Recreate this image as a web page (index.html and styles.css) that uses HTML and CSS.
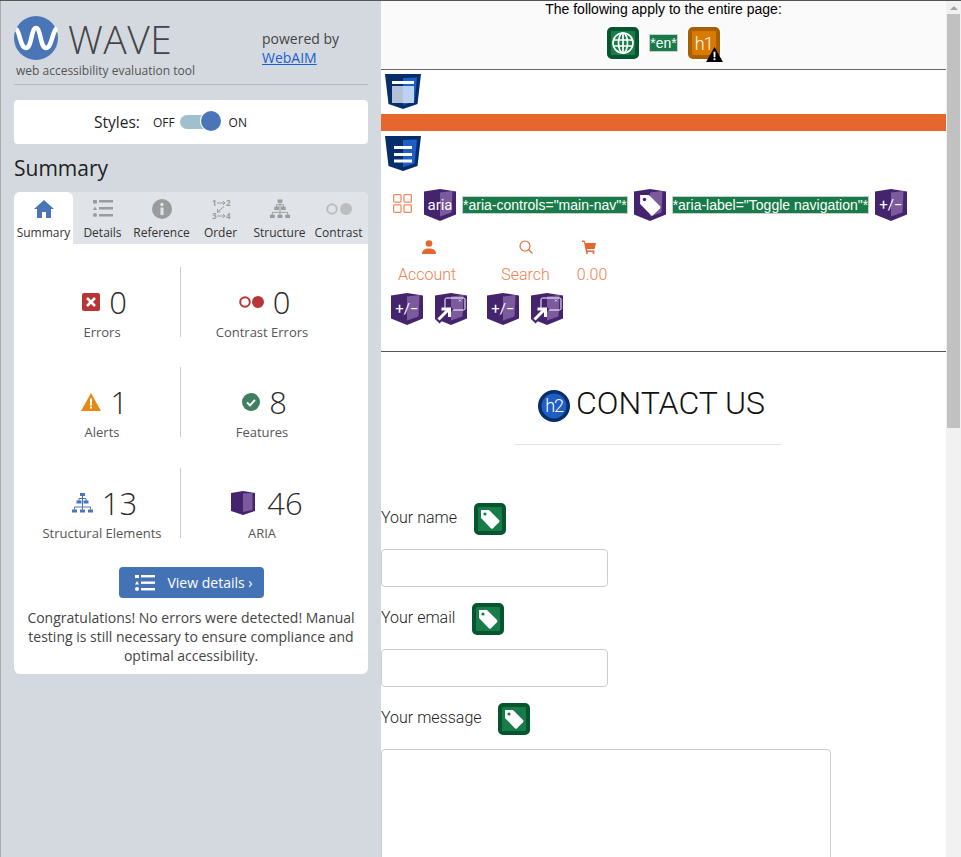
FILE: index.html
```html
<!DOCTYPE html>
<html lang="en">
<head>
  <meta charset="UTF-8" />
  <meta name="viewport" content="width=device-width, initial-scale=1.0" />
  <title>WAVE Report</title>
  <link rel="stylesheet" href="styles.css">
</head>
<body>
  <svg class="defs" xmlns="http://www.w3.org/2000/svg">
    <symbol id="shield-purple" viewBox="0 0 32 32">
      <path d="M0 2.500 16 0l16 2.500v23L16 32 0 25.500z" fill="#45246e"/>
      <path d="M16 3.500 28.500 2l-1 21.500L16 27.500z" fill="#7c5a9e"/>
    </symbol>
    <symbol id="shield-blue" viewBox="0 0 36 36">
      <path d="M0 0h36l-3.500 30L18 35 3.500 30z" fill="#052e6b"/>
      <path d="M18 4 32 3.500l-2.500 24L18 31z" fill="#1f5fc4"/>
    </symbol>
    <symbol id="tag-glyph" viewBox="0 0 20 20">
      <path d="M1 1h8l10 10a1.600 1.600 0 0 1 0 2.200l-6 6a1.600 1.600 0 0 1-2.200 0L1 9z" fill="#fff"/>
    </symbol>
    <symbol id="plus-minus" viewBox="0 0 32 32">
      <use href="#shield-purple"/>
      <text x="16" y="21" text-anchor="middle" class="icon-text" font-size="15">+/−</text>
    </symbol>
    <symbol id="expand" viewBox="0 0 32 32">
      <use href="#shield-purple"/>
      <rect x="10" y="5" width="20" height="12" rx="1.500" fill="none" stroke="#fff"/>
      <path d="M24 6.500l2 2m0-2-2 2" stroke="#fff" stroke-width=".7"/>
      <path d="M2 28 16 14" stroke="#45246e" stroke-width="7"/>
      <path d="M3.500 26.500 13.500 16.500" stroke="#fff" stroke-width="3"/>
      <path d="M6.500 16h8v8" fill="none" stroke="#fff" stroke-width="3"/>
    </symbol>
  </svg>

  <aside class="sidebar">
    <header class="brand">
      <div class="brand-left">
        <div class="logo-row">
          <svg class="logo" viewBox="0 0 44 44">
            <circle cx="22" cy="22" r="22" fill="#4a76b8"/>
            <path d="M2 13C6 15 6 32 12 32 18 32 17 12 22 12 27 12 26 32 32 32 38 32 38 15 43 12" fill="none" stroke="#fff" stroke-width="4.500"/>
          </svg>
          <span class="logo-word">WAVE</span>
        </div>
        <div class="tagline">web accessibility evaluation tool</div>
      </div>
      <div class="powered">powered by<br><a href="#">WebAIM</a></div>
    </header>

    <div class="styles-card">
      <span class="styles-label">Styles:</span>
      <span class="switch-text">OFF</span>
      <span class="switch"><span class="switch-knob"></span></span>
      <span class="switch-text">ON</span>
    </div>

    <h2 class="side-title">Summary</h2>

    <div class="panel">
      <nav class="tabs">
        <div class="tab active">
          <svg viewBox="0 0 20 18"><path d="M10 0 20 9h-3v9h-5v-6H8v6H3V9H0z" fill="#4a76b8"/></svg>
          <span>Summary</span>
        </div>
        <div class="tab">
          <svg viewBox="0 0 20 18" fill="#9b9b9b"><rect x="0" y="0" width="4" height="3.500" rx=".5"/><rect x="6" y="0" width="14" height="2.500"/><path d="M2 6.500 4 10H0z"/><rect x="6" y="7" width="14" height="2.500"/><circle cx="2" cy="15" r="2"/><rect x="6" y="14" width="14" height="2.500"/></svg>
          <span>Details</span>
        </div>
        <div class="tab">
          <svg viewBox="0 0 20 20"><circle cx="10" cy="10" r="10" fill="#9b9b9b"/><rect x="8.500" y="8.500" width="3" height="7.500" fill="#e0e3e8"/><circle cx="10" cy="5.500" r="1.700" fill="#e0e3e8"/></svg>
          <span>Reference</span>
        </div>
        <div class="tab">
          <svg class="order-ico" viewBox="0 -3 20 26">
            <text x="1" y="7" class="order-num">1</text><text x="15" y="7" class="order-num">2</text>
            <text x="1" y="20" class="order-num">3</text><text x="15" y="20" class="order-num">4</text>
            <path d="M6 4h8M12 2l2 2-2 2M6 17h8M12 15l2 2-2 2M13 7.500 6.500 13M6.500 10v3h3" fill="none" stroke="#9b9b9b"/>
          </svg>
          <span>Order</span>
        </div>
        <div class="tab">
          <svg viewBox="0 0 21 20"><g fill="#9b9b9b"><rect x="8" y="0" width="5" height="3.500"/><rect x="4.500" y="7.500" width="5" height="3.500"/><rect x="11.500" y="7.500" width="5" height="3.500"/><rect x="0" y="16" width="5" height="3.500"/><rect x="8" y="16" width="5" height="3.500"/><rect x="16" y="16" width="5" height="3.500"/></g><path d="M10.500 3v13.500M7 9.500V5.500h7v4M2.500 16v-2.500h16V16" fill="none" stroke="#9b9b9b"/></svg>
          <span>Structure</span>
        </div>
        <div class="tab">
          <svg class="contrast-tab" viewBox="0 0 26 12"><circle cx="6" cy="6" r="4.800" fill="none" stroke="#bdbdbd" stroke-width="2"/><circle cx="20" cy="6" r="6" fill="#bdbdbd"/></svg>
          <span>Contrast</span>
        </div>
      </nav>

      <div class="stats">
        <div class="stat">
          <div class="stat-top">
            <svg class="ico-18" viewBox="0 0 18 18"><rect width="18" height="18" rx="2" fill="#b93535"/><path d="M5 5l8 8m0-8-8 8" stroke="#fff" stroke-width="2.600"/></svg>
            <span class="stat-num">0</span>
          </div>
          <div class="stat-label">Errors</div>
        </div>
        <div class="stat">
          <div class="stat-top">
            <svg class="ico-contrast" viewBox="0 0 25 12"><circle cx="6" cy="6" r="4.800" fill="none" stroke="#b93535" stroke-width="2"/><circle cx="19" cy="6" r="6" fill="#b93535"/></svg>
            <span class="stat-num">0</span>
          </div>
          <div class="stat-label">Contrast Errors</div>
        </div>
        <div class="stat">
          <div class="stat-top">
            <svg class="ico-alert" viewBox="0 0 20 18"><path d="M10 0 20 18H0z" fill="#e68a14"/><rect x="9" y="5.500" width="2" height="7" fill="#fff"/><rect x="9" y="13.500" width="2" height="2" fill="#fff"/></svg>
            <span class="stat-num">1</span>
          </div>
          <div class="stat-label">Alerts</div>
        </div>
        <div class="stat">
          <div class="stat-top">
            <svg class="ico-18" viewBox="0 0 18 18"><circle cx="9" cy="9" r="9" fill="#3f7f5f"/><path d="M5 9.500l3 2.800 5-5.500" fill="none" stroke="#fff" stroke-width="2"/></svg>
            <span class="stat-num">8</span>
          </div>
          <div class="stat-label">Features</div>
        </div>
        <div class="stat">
          <div class="stat-top">
            <svg class="ico-tree" viewBox="0 0 21 20"><g fill="#4a76b8"><rect x="8" y="0" width="5" height="3"/><rect x="4.500" y="7.500" width="5" height="3"/><rect x="11.500" y="7.500" width="5" height="3"/><rect x="0" y="16.500" width="5" height="3"/><rect x="8" y="16.500" width="5" height="3"/><rect x="16" y="16.500" width="5" height="3"/></g><path d="M10.500 3v13.500M7 8V5.500h7V8M2.500 16.500v-2.500h16v2.500" fill="none" stroke="#4a76b8"/></svg>
            <span class="stat-num">13</span>
          </div>
          <div class="stat-label">Structural Elements</div>
        </div>
        <div class="stat">
          <div class="stat-top">
            <svg class="ico-aria" viewBox="0 0 24 24"><path d="M0 2 12 0l12 2v18l-12 4-12-4z" fill="#45246e"/><path d="M12 2.500 21.500 2v17L12 21z" fill="#7c5a9e"/></svg>
            <span class="stat-num">46</span>
          </div>
          <div class="stat-label">ARIA</div>
        </div>
      </div>

      <button class="details-btn">
        <svg viewBox="0 0 20 16" fill="#fff"><rect x="0" y="0" width="4" height="3"/><rect x="6" y="0" width="14" height="2.400"/><path d="M2 6 4 9.500H0z"/><rect x="6" y="6.500" width="14" height="2.400"/><circle cx="2" cy="14" r="2"/><rect x="6" y="13" width="14" height="2.400"/></svg>
        <span>View details ›</span>
      </button>

      <p class="congrats">Congratulations! No errors were detected! Manual testing is still necessary to ensure compliance and optimal accessibility.</p>
    </div>
  </aside>

  <main class="page">
    <section class="page-notes">
      <div class="notes-title">The following apply to the entire page:</div>
      <div class="notes-icons">
        <span class="wave-box green">
          <svg class="globe" viewBox="0 0 22 22" fill="none" stroke="#fff" stroke-width="1.700"><circle cx="11" cy="11" r="10"/><ellipse cx="11" cy="11" rx="4.500" ry="10"/><path d="M11 1v20M1.500 8h19M1.500 14h19"/></svg>
        </span>
        <span class="chip">*en*</span>
        <span class="wave-box orange">
          <span class="box-text">h1</span>
          <svg class="warn-badge" viewBox="0 0 18 16"><path d="M9 0 18 16H0z" fill="#000"/><rect x="8" y="5" width="2" height="6" fill="#fff"/><rect x="8" y="12" width="2" height="2" fill="#fff"/></svg>
        </span>
      </div>
    </section>

    <svg class="shield-36" viewBox="0 0 36 36">
      <use href="#shield-blue"/>
      <rect x="7" y="7" width="22" height="3" fill="#fff"/>
      <rect x="7" y="12" width="11" height="17" fill="#b3c2d6"/>
      <rect x="18" y="12" width="11" height="17" fill="#bcd3ef"/>
    </svg>
    <div class="orange-bar"></div>
    <svg class="shield-36" viewBox="0 0 36 36">
      <use href="#shield-blue"/>
      <path d="M9 10h18v3H9zM9 17h18v3H9zM9 23.500h18v3H9z" fill="#fff"/>
    </svg>

    <div class="toolbar">
      <svg class="grid-ico" viewBox="0 0 18 18" fill="none" stroke="#f08b5f" stroke-width="1.200"><rect x=".6" y=".6" width="7" height="7" rx=".8"/><rect x="10.400" y=".6" width="7" height="7" rx=".8"/><rect x=".6" y="10.400" width="7" height="7" rx=".8"/><rect x="10.400" y="10.400" width="7" height="7" rx=".8"/></svg>
      <svg class="shield-32" viewBox="0 0 32 32"><use href="#shield-purple"/><text x="16" y="20.500" text-anchor="middle" class="icon-text" font-size="15">aria</text></svg>
      <span class="chip">*aria-controls="main-nav"*</span>
      <svg class="shield-32" viewBox="0 0 32 32"><use href="#shield-purple"/><use href="#tag-glyph" x="5" y="5" width="22" height="22"/><circle cx="10.500" cy="10.500" r="1.700" fill="#45246e"/></svg>
      <span class="chip">*aria-label="Toggle navigation"*</span>
      <svg class="shield-32" viewBox="0 0 32 32"><use href="#plus-minus"/></svg>
    </div>

    <div class="shop-links">
      <div class="shop-link account">
        <svg viewBox="0 0 14 14" fill="#e5672d"><circle cx="7" cy="3.500" r="3.300"/><path d="M0 14c0-4 3-5.500 7-5.500s7 1.500 7 5.500z"/></svg>
        <span>Account</span>
      </div>
      <div class="shop-link search">
        <svg viewBox="0 0 14 14" fill="none" stroke="#e5672d" stroke-width="1.100"><circle cx="6" cy="6" r="5"/><path d="M9.500 9.500 13.500 13.500"/></svg>
        <span>Search</span>
      </div>
      <div class="shop-link cart">
        <svg viewBox="0 0 14 14" fill="#e5672d"><path d="M0 .5h2.500L3.500 3H14l-1.500 6H5l.4 1.500H12.500V12H4L2 2H0z"/><circle cx="5" cy="13" r="1"/><circle cx="11.500" cy="13" r="1"/></svg>
        <span>0.00</span>
      </div>
    </div>

    <div class="shop-icons">
      <svg class="shield-32" viewBox="0 0 32 32"><use href="#plus-minus"/></svg>
      <svg class="shield-32" viewBox="0 0 32 32"><use href="#expand"/></svg>
      <svg class="shield-32 next-group" viewBox="0 0 32 32"><use href="#plus-minus"/></svg>
      <svg class="shield-32" viewBox="0 0 32 32"><use href="#expand"/></svg>
    </div>

    <hr class="dark-rule">

    <h2 class="contact-title">
      <svg class="shield-32" viewBox="0 0 32 32"><circle cx="16" cy="16" r="16" fill="#052e6b"/><circle cx="16" cy="16" r="12.500" fill="#1f5fc4"/><text x="16" y="22" text-anchor="middle" class="icon-text tight" font-size="18">h2</text></svg>
      <span class="contact-text">CONTACT US</span>
    </h2>
    <hr class="light-rule">

    <form class="contact-form">
      <div class="field-label name-label"><label>Your name</label><span class="wave-box green plain"><svg viewBox="0 0 20 20"><use href="#tag-glyph"/><circle cx="5" cy="5" r="1.600" fill="#187b4a"/></svg></span></div>
      <input type="text" class="text-input">
      <div class="field-label email-label"><label>Your email</label><span class="wave-box green plain"><svg viewBox="0 0 20 20"><use href="#tag-glyph"/><circle cx="5" cy="5" r="1.600" fill="#187b4a"/></svg></span></div>
      <input type="text" class="text-input">
      <div class="field-label message-label"><label>Your message</label><span class="wave-box green plain"><svg viewBox="0 0 20 20"><use href="#tag-glyph"/><circle cx="5" cy="5" r="1.600" fill="#187b4a"/></svg></span></div>
      <textarea class="text-area"></textarea>
    </form>
  </main>

  <div class="scrollbar">
    <div class="scroll-up"></div>
    <div class="scroll-thumb"></div>
  </div>
</body>
</html>
```

FILE: styles.css
```css
html, body {
  margin: 0;
  height: 857px;
  overflow: hidden;
}
body {
  display: flex;
  border-top: 1px solid #555;
  box-sizing: border-box;
  font-family: "Open Sans", sans-serif;
  color: #444;
  background: #fff;
}
.defs {
  display: none;
}

/* sidebar */
.sidebar {
  width: 381px;
  flex: none;
  box-sizing: border-box;
  background: #d4d9e0;
  border-left: 1px solid #aaa;
  padding: 15px 13px 0 13px;
}
.brand {
  display: flex;
  height: 68px;
  border-bottom: 1px solid #b4b8bd;
}
.brand-left {
  width: 248px;
}
.logo-row {
  display: flex;
  align-items: center;
  gap: 10px;
  height: 44px;
}
.logo {
  width: 44px;
  height: 44px;
}
.logo-word {
  font-size: 39px;
  font-weight: 300;
  color: #444;
  letter-spacing: 0.5px;
}
.tagline {
  font-size: 12px;
  line-height: 18px;
  margin: 2px 0 0 2px;
  color: #555;
}
.powered {
  font-size: 14px;
  line-height: 19px;
  padding-top: 13px;
  color: #444;
}
.powered a {
  color: #1a5fd0;
}
.styles-card {
  margin-top: 15px;
  height: 44px;
  padding-left: 80px;
  background: #fff;
  border-radius: 4px;
  display: flex;
  align-items: center;
  color: #222;
}
.styles-label {
  font-size: 15.500px;
  margin-right: 13px;
}
.switch-text {
  font-size: 12px;
}
.switch {
  width: 36px;
  height: 14px;
  margin: 0 13px 0 5px;
  border-radius: 7px;
  background: #9fc0cc;
  position: relative;
}
.switch-knob {
  position: absolute;
  right: -5px;
  top: -4px;
  width: 20px;
  height: 20px;
  border-radius: 50%;
  background: #4a76b8;
  box-shadow: 0 0 0 1px #fff;
}
.side-title {
  margin: 11px 0 11px;
  font-size: 21px;
  line-height: 26px;
  font-weight: 400;
  color: #222;
}
.panel {
  background: #fff;
  border-radius: 6px;
  height: 482px;
}
.tabs {
  display: flex;
  height: 52px;
  background: #e0e3e8;
  border-radius: 6px 6px 0 0;
}
.tab {
  width: 59px;
  display: flex;
  flex-direction: column;
  align-items: center;
  justify-content: flex-end;
  padding-bottom: 3px;
  box-sizing: border-box;
  font-size: 12px;
  line-height: 17px;
  color: #333;
  white-space: nowrap;
}
.tab.active {
  background: #fff;
  border-radius: 6px 6px 0 0;
}
.tab svg {
  width: 20px;
  height: 20px;
  margin-bottom: 5px;
}
.tab .contrast-tab {
  width: 26px;
}
.tab .order-ico {
  height: 26px;
  margin-bottom: 2px;
}
.order-num {
  font-size: 8px;
  font-weight: 700;
  fill: #9b9b9b;
}
.stats {
  display: grid;
  grid-template-columns: 157px 162px;
  margin: 23px 0 0 10px;
  row-gap: 30px;
}
.stat {
  height: 70px;
  text-align: center;
}
.stat:nth-child(odd) {
  border-right: 1px solid #ccc;
}
.stat:nth-child(n+5) {
  margin-top: 1px;
}
.stat-top {
  display: flex;
  justify-content: center;
  align-items: center;
  gap: 9px;
  height: 36px;
  padding: 17px 0 0 5px;
}
.stat-num {
  font-size: 31px;
  line-height: 36px;
  font-weight: 300;
  color: #2a2a2a;
}
.stat-label {
  font-size: 13px;
  line-height: 18px;
  margin-top: 3px;
  color: #555;
}
.ico-18 {
  width: 18px;
  height: 18px;
}
.ico-contrast {
  width: 25px;
  height: 12px;
}
.ico-alert {
  width: 20px;
  height: 18px;
}
.ico-tree {
  width: 21px;
  height: 20px;
}
.ico-aria {
  width: 24px;
  height: 24px;
  margin: 0 3px 0 5px;
}
.details-btn {
  display: flex;
  align-items: center;
  justify-content: center;
  gap: 12px;
  width: 145px;
  height: 31px;
  margin: 29px auto 0;
  padding: 0 0 0 6px;
  border: none;
  border-radius: 4px;
  background: #4473b5;
  color: #fff;
  font-family: "Open Sans", sans-serif;
  font-size: 14px;
}
.details-btn svg {
  width: 20px;
  height: 16px;
}
.congrats {
  margin: 10px 12px 0;
  text-align: center;
  font-size: 14px;
  line-height: 19px;
  color: #444;
}

/* page being checked */
.page {
  flex: 1;
  min-width: 0;
  overflow: hidden;
  font-family: Roboto, sans-serif;
  font-weight: 300;
  color: #222;
}
.page-notes {
  height: 69px;
  box-sizing: border-box;
  background: #fafafa;
  border-bottom: 1px solid #666;
  text-align: center;
  font-family: "Liberation Sans", sans-serif;
  font-weight: 400;
  font-size: 14px;
  color: #000;
}
.notes-title {
  line-height: 16px;
}
.notes-icons {
  display: flex;
  justify-content: center;
  align-items: center;
  gap: 10px;
  margin-top: 10px;
}
.wave-box {
  width: 32px;
  height: 32px;
  box-sizing: border-box;
  border: 4px solid;
  border-radius: 5px;
  display: flex;
  align-items: center;
  justify-content: center;
  position: relative;
  flex: none;
  box-shadow: 0 0 0 2px #fff;
}
.wave-box.plain {
  box-shadow: none;
}
.wave-box svg {
  width: 20px;
  height: 20px;
  flex: none;
}
.wave-box .globe {
  width: 22px;
  height: 22px;
}
.green {
  background: #187b4a;
  border-color: #05562f;
}
.orange {
  background: #d97900;
  border-color: #a85f00;
}
.box-text {
  color: #fff;
  font-size: 18px;
  letter-spacing: -1px;
  font-family: Roboto, sans-serif;
  font-weight: 300;
}
.wave-box .warn-badge {
  position: absolute;
  right: -7px;
  bottom: -7px;
  width: 17px;
  height: 15px;
}
.chip {
  background: #187b4a;
  border: 1px solid #ccc;
  color: #fff;
  font-family: "Liberation Sans", sans-serif;
  font-weight: 400;
  font-size: 14px;
  line-height: 16px;
  white-space: nowrap;
}
.icon-text {
  fill: #fff;
  font-family: Roboto, sans-serif;
  font-weight: 400;
}
.icon-text.tight {
  font-weight: 300;
  letter-spacing: -1.200px;
}
.shield-36 {
  display: block;
  width: 36px;
  height: 36px;
  margin: 4px 0 0 4px;
}
.orange-bar {
  height: 17px;
  margin-top: 4px;
  background: #e5672d;
}
.orange-bar + .shield-36 {
  margin-top: 5px;
}
.shield-32 {
  display: block;
  width: 32px;
  height: 32px;
  flex: none;
}
.toolbar {
  display: flex;
  align-items: center;
  margin: 17px 0 0 12px;
  gap: 6px;
}
.grid-ico {
  width: 19px;
  height: 19px;
  margin: -4px 6px 0 0;
}
.shop-links {
  display: flex;
  margin-top: 19px;
  color: #ee7f50;
  font-size: 16px;
  line-height: 20px;
}
.shop-link {
  display: flex;
  flex-direction: column;
  align-items: center;
  gap: 11px;
}
.shop-link svg {
  width: 14px;
  height: 14px;
}
.account {
  margin-left: 17px;
}
.account svg {
  margin-left: 4px;
}
.search {
  margin-left: 45px;
}
.cart {
  margin-left: 27px;
}
.cart svg {
  margin-right: 6px;
}
.shop-icons {
  display: flex;
  gap: 12px;
  margin: 8px 0 0 10px;
}
.next-group {
  margin-left: 8px;
}
.dark-rule {
  margin: 26px 0 0;
  border: none;
  border-top: 1px solid #555;
}
.contact-title {
  display: flex;
  align-items: center;
  gap: 6px;
  margin: 38px 0 0 157px;
  font-size: 32px;
  line-height: 32px;
  font-weight: 300;
  color: #111;
}
.contact-text {
  margin-top: -6px;
}
.light-rule {
  width: 267px;
  margin: 22px 0 0 134px;
  border: none;
  border-top: 1px solid #e5e5e5;
}
.contact-form {
  margin-top: 58px;
}
.field-label {
  display: flex;
  align-items: center;
  height: 32px;
  font-size: 16px;
}
.field-label label {
  margin-top: -4px;
}
.name-label {
  gap: 17px;
}
.email-label {
  gap: 17px;
}
.message-label {
  gap: 16px;
}
.text-input {
  display: block;
  box-sizing: border-box;
  width: 227px;
  height: 38px;
  margin: 14px 0 16px;
  border: 1px solid #ccc;
  border-radius: 4px;
  background: #fff;
}
.text-area {
  display: block;
  box-sizing: border-box;
  width: 450px;
  height: 200px;
  margin: 14px 0 0;
  border: 1px solid #ccc;
  border-radius: 4px;
  resize: none;
}

.scrollbar {
  width: 15px;
  flex: none;
  background: #f1f1f1;
}
.scroll-up {
  width: 0;
  height: 0;
  margin: 5px auto 4px;
  border-left: 4px solid transparent;
  border-right: 4px solid transparent;
  border-bottom: 4px solid #a3a3a3;
}
.scroll-thumb {
  height: 414px;
  margin: 2px 1px 0;
  background: #c1c1c1;
}
```
